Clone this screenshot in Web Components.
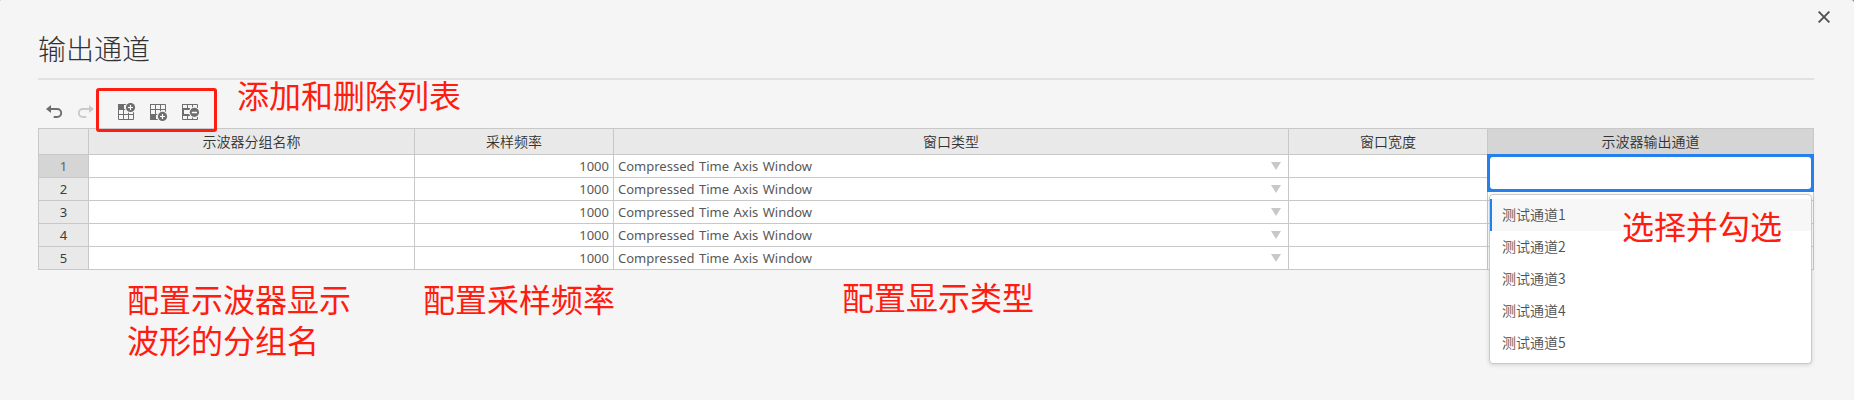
<!DOCTYPE html>
<html lang="zh-CN">
<head>
<meta charset="utf-8">
<title>输出通道</title>
<style>
html,body{margin:0;height:100%;background:#808080}
</style>
</head>
<body>
<channel-dialog heading="输出通道">
  <tool-bar slot="tools"></tool-bar>
  <channel-grid slot="body"></channel-grid>
  <red-frame slot="notes"></red-frame>
  <red-note slot="notes" style="left:237px;top:74px">添加和删除列表</red-note>
  <red-note slot="notes" style="left:127px;top:278px">配置示波器显示<br>波形的分组名</red-note>
  <red-note slot="notes" style="left:423px;top:278px">配置采样频率</red-note>
  <red-note slot="notes" style="left:842px;top:276px">配置显示类型</red-note>
  <red-note slot="notes" style="left:1622px;top:205px">选择并勾选</red-note>
</channel-dialog>
<script>
const define = (name, html, init) => customElements.define(name, class extends HTMLElement {
  constructor() {
    super();
    const t = document.createElement('template');
    t.innerHTML = html;
    this.attachShadow({mode: 'open'}).append(t.content.cloneNode(true));
  }
  connectedCallback() { if (init) init(this, this.shadowRoot); }
});

define('red-note', `<style>
:host{position:absolute;z-index:3;font:32px/41px "Noto Sans CJK SC",sans-serif;color:#ff1c10;white-space:nowrap}
</style><slot></slot>`);

define('red-frame', `<style>
:host{position:absolute;left:96px;top:88px;width:121px;height:44px;box-sizing:border-box;border:3px solid #ff1c10;border-radius:3px}
</style>`);

define('tool-bar', `<style>
:host{display:flex;align-items:center;height:24px;padding-left:8px;color:#6e6e6e}
svg{display:block;width:18px;height:18px;flex:none}
.redo{margin-left:14px;color:#cacaca}
.first{margin-left:22px}
.next{margin-left:14px}
</style>
<svg viewBox="0 0 18 18"><path d="M0 6 5 2V5H11.2a4.9 4.9 0 0 1 0 9.9H7.7V13H11.2a3 3 0 0 0 0-6.1H5V10Z" fill="currentColor"/></svg>
<svg class="redo" viewBox="0 0 18 18"><path d="M16 6 11 2V5H4.8a4.9 4.9 0 0 0 0 9.9H8.3V13H4.8a3 3 0 0 1 0-6.1H11V10Z" fill="currentColor"/></svg>
<svg class="first" viewBox="0 0 18 18"><path d="M.5 1V16.5H15.5V1.5H.5M5.5 1V16M10.5 1V16M0 6.5H16M0 11.5H16" fill="none" stroke="currentColor"/><path d="M0 1H6V7H0Z" fill="currentColor"/><circle cx="12.5" cy="4.5" r="5.6" fill="#f4f4f4"/><circle cx="12.5" cy="4.5" r="4.6" fill="currentColor"/><path d="M10 4.5H15M12.5 2V7" stroke="#fff" stroke-width="1.2"/></svg>
<svg class="next" viewBox="0 0 18 18"><path d="M.5 1V16.5H15.5V1.5H.5M5.5 1V16M10.5 1V16M0 6.5H16M0 11.5H16" fill="none" stroke="currentColor"/><path d="M0 11H6V17H0Z" fill="currentColor"/><circle cx="12.5" cy="13.4" r="5.6" fill="#f4f4f4"/><circle cx="12.5" cy="13.4" r="4.6" fill="currentColor"/><path d="M10 13.5H15M12.5 11V16" stroke="#fff" stroke-width="1.2"/></svg>
<svg class="next" viewBox="0 0 18 18"><path d="M.5 1V16.5H15.5V1.5H.5M5.5 1V6M5.5 12V16M10.5 1V6M10.5 12V16" fill="none" stroke="currentColor"/><path d="M8 6H1V12H8" fill="none" stroke="currentColor" stroke-width="2"/><circle cx="12.4" cy="9.3" r="5.6" fill="#f4f4f4"/><circle cx="12.4" cy="9.3" r="4.6" fill="currentColor"/><path d="M9.8 9.5H15" stroke="#fff" stroke-width="1.4"/></svg>`);

define('option-item', `<style>
:host{display:flex;align-items:center;box-sizing:border-box;height:32px;padding:0 0 2px 12px;font:14px/20px "Noto Sans CJK SC",sans-serif;font-weight:350;color:#505050}
:host([active]){background:#f7f7f7;box-shadow:inset 2px 0 #2680eb}
</style><slot></slot>`);

define('channel-picker', `<style>
:host{display:block;position:absolute;left:-1px;top:-1px;width:327px;z-index:1}
.edit{height:38px;box-sizing:border-box;background:#2680eb;padding:3px}
.edit div{height:100%;background:#fff;border-radius:3px}
.menu{margin:2px 2px 0;width:323px;height:170px;box-sizing:border-box;border:1px solid #cacaca;border-radius:4px;background:#fff;padding-top:4px;box-shadow:0 1px 4px rgba(0,0,0,.15)}
</style><div class="edit"><div></div></div>
<div class="menu"><option-item active>测试通道1</option-item><option-item>测试通道2</option-item><option-item>测试通道3</option-item><option-item>测试通道4</option-item><option-item>测试通道5</option-item></div>`);

define('grid-cell', `<style>
:host{display:flex;align-items:center;position:relative;box-sizing:border-box;border:solid #c8c8c8;border-width:0 1px 1px 0;background:#fff;font:13px/18px "Noto Sans",sans-serif;color:#585858;padding:0 4px;min-width:0;word-spacing:1.1px}
:host([head]){justify-content:center;background:#e9e9e9;color:#323232;font:14px/20px "Noto Sans CJK SC",sans-serif;font-weight:350;padding-bottom:2px}
:host([index]){justify-content:center;background:#e9e9e9;color:#3c3c3c}
:host([active]){background:#d5d5d5}
:host([index][active]){color:#606060}
:host([num]){justify-content:flex-end}
:host([choice]){justify-content:space-between;padding-right:7px}
svg{display:none;width:10px;height:8px}
:host([choice]) svg{display:block}
</style><slot></slot><svg viewBox="0 0 10 8"><path d="M0 0H10L5 8Z" fill="#c8c8c8"/></svg>`);

define('channel-grid', `<style>
:host{display:grid;grid-template-columns:50px 326px 199px 675px 199px 326px;grid-template-rows:26px repeat(5,23px);border:solid #c8c8c8;border-width:1px 0 0 1px;width:1775px}
</style>`, (el, root) => {
  const cell = (attrs, text = '') => {
    const c = document.createElement('grid-cell');
    attrs.split(' ').filter(Boolean).forEach(a => c.setAttribute(a, ''));
    c.textContent = text;
    root.append(c);
    return c;
  };
  cell('head');
  ['示波器分组名称', '采样频率', '窗口类型', '窗口宽度'].forEach(t => cell('head', t));
  cell('head active', '示波器输出通道');
  for (let i = 1; i <= 5; i++) {
    cell(i === 1 ? 'index active' : 'index', String(i));
    cell('');
    cell('num', '1000');
    cell('choice', 'Compressed Time Axis Window');
    cell('');
    const last = cell('');
    if (i === 1) {
      last.style.zIndex = 1;
      last.append(document.createElement('channel-picker'));
    }
  }
});

define('channel-dialog', `<style>
:host{display:block;position:relative;box-sizing:border-box;width:1854px;height:400px;padding:0 40px 0 38px;background:#f5f5f5;overflow:hidden;border-radius:1px 3px 0 0}
header{height:80px;box-sizing:border-box;border-bottom:2px solid #e1e1e1;padding-top:28px}
h1{margin:0;font:28px/40px "Noto Sans CJK SC",sans-serif;font-weight:300;color:#323232}
.tools{padding-top:20px;height:28px}
.close{position:absolute;left:1818px;top:11px;width:12px;height:12px}
</style>
<header><h1></h1></header>
<svg class="close" viewBox="0 0 12 12"><path d="M.6.6 11.4 11.4M11.4.6.6 11.4" stroke="#505050" stroke-width="1.9"/></svg>
<div class="tools"><slot name="tools"></slot></div>
<slot name="body"></slot>
<slot name="notes"></slot>`, (el, root) => { root.querySelector('h1').textContent = el.getAttribute('heading'); });
</script>
</body>
</html>
